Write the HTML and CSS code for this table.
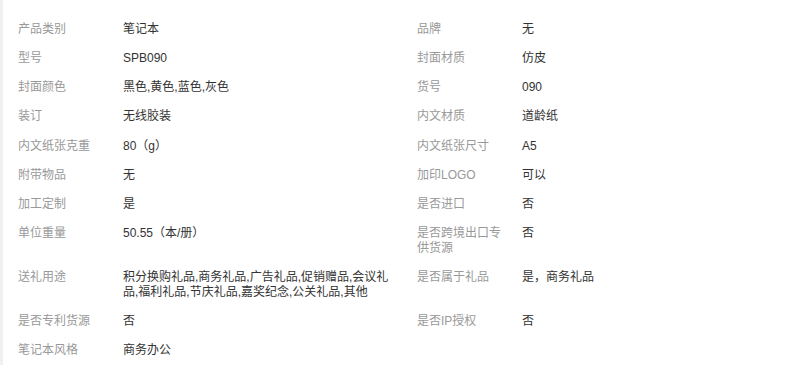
FILE: index.html
```html
<!DOCTYPE html>
<html lang="zh-CN">
<head>
<meta charset="utf-8">
<title>产品参数</title>
<link rel="stylesheet" href="styles.css">
</head>
<body>
<div class="attrs">
  <div class="k">产品类别</div><div class="v">笔记本</div>
  <div class="k">品牌</div><div class="v">无</div>

  <div class="k">型号</div><div class="v">SPB090</div>
  <div class="k">封面材质</div><div class="v">仿皮</div>

  <div class="k">封面颜色</div><div class="v">黑色,黄色,蓝色,灰色</div>
  <div class="k">货号</div><div class="v">090</div>

  <div class="k">装订</div><div class="v">无线胶装</div>
  <div class="k">内文材质</div><div class="v">道龄纸</div>

  <div class="k">内文纸张克重</div><div class="v">80（g）</div>
  <div class="k">内文纸张尺寸</div><div class="v">A5</div>

  <div class="k">附带物品</div><div class="v">无</div>
  <div class="k">加印LOGO</div><div class="v">可以</div>

  <div class="k">加工定制</div><div class="v">是</div>
  <div class="k">是否进口</div><div class="v">否</div>

  <div class="k">单位重量</div><div class="v">50.55（本/册）</div>
  <div class="k">是否跨境出口专供货源</div><div class="v">否</div>

  <div class="k">送礼用途</div><div class="v">积分换购礼品,商务礼品,广告礼品,促销赠品,会议礼品,福利礼品,节庆礼品,嘉奖纪念,公关礼品,其他</div>
  <div class="k">是否属于礼品</div><div class="v">是，商务礼品</div>

  <div class="k">是否专利货源</div><div class="v">否</div>
  <div class="k">是否IP授权</div><div class="v">否</div>

  <div class="k">笔记本风格</div><div class="v">商务办公</div>
</div>
</body>
</html>
```

FILE: styles.css
```css
html, body {
  margin: 0;
  padding: 0;
  background: #ffffff;
}

body {
  font-family: "Liberation Sans", "Noto Sans CJK SC", sans-serif;
  font-size: 12px;
  line-height: 15px;
  overflow: hidden;
}

.attrs {
  border-left: 3px solid #f0f0f0;
  padding-top: 15.3px;
  min-height: 365px;
  box-sizing: border-box;
  display: grid;
  grid-template-columns: 120px 279px 120px 1fr;
  align-items: start;
}

.k {
  padding: 7px 15px 7px 15px;
  color: #999999;
}

.v {
  padding: 7px 10px 7px 0;
  color: #333333;
}
```
